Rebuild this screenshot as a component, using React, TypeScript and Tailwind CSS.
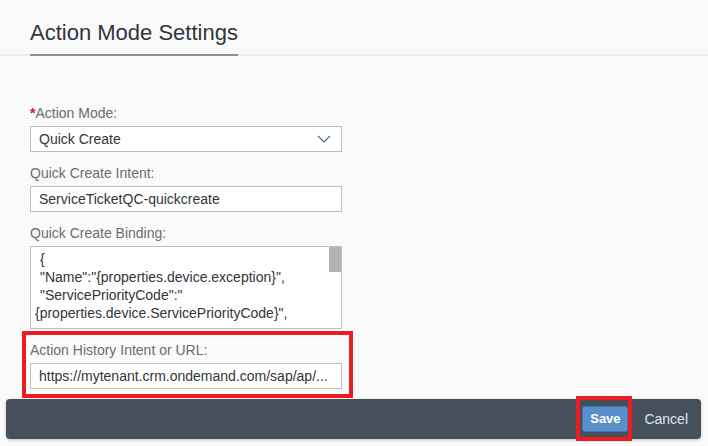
import React from 'react'

const inputBox =
	'h-[26px] border border-[#bfbfbf] bg-white flex items-center px-[8px] text-[14px] text-[#32363a] whitespace-nowrap overflow-hidden'

function Label({ text, required }: { text: string; required?: boolean }) {
	return (
		<div className="h-[18px] leading-[18px] text-[14px] text-[#6a6d70] mb-[4px]">
			{required && <span className="text-[#c9202a] font-bold">*</span>}
			{text}
		</div>
	)
}

const bindingLines = [
	{ text: '{', indent: true },
	{ text: '"Name":"{properties.device.exception}",', indent: true },
	{ text: '"ServicePriorityCode":"', indent: true },
	{ text: '{properties.device.ServicePriorityCode}",', indent: false },
]

export default function App() {
	return (
		<div className="w-[708px] h-[446px] bg-[#fafafa] overflow-hidden font-['Liberation_Sans',Arial,sans-serif]">
			{/* header */}
			<div className="h-[56px] border-b-2 border-[#ececec] px-[30px] flex">
				<div className="mb-[-2px] border-b-2 border-[#8f8f8f] pt-[22px] pb-[10px] text-[22px] leading-[22px] text-[#32363a]">
					Action Mode Settings
				</div>
			</div>

			{/* form */}
			<div className="pt-[48px] px-[30px] w-[342px] box-content">
				<div className="w-[312px]">
					<Label text="Action Mode:" required />
					<div className={`${inputBox} justify-between pr-[10px]`}>
						<span>Quick Create</span>
						<svg width="14" height="8" viewBox="0 0 14 8" fill="none">
							<path d="M1 1 L7 7 L13 1" stroke="#4a6f91" strokeWidth="1.2" />
						</svg>
					</div>

					<div className="mt-[12px]">
						<Label text="Quick Create Intent:" />
						<div className={inputBox}>ServiceTicketQC-quickcreate</div>
					</div>

					<div className="mt-[12px]">
						<Label text="Quick Create Binding:" />
						<div className="h-[83px] border border-[#bfbfbf] bg-white flex overflow-hidden">
							<div className="flex-1 pl-[4px] pt-[3px] text-[14px] leading-[18px] text-[#32363a] whitespace-pre">
								{bindingLines.map((line, idx) => (
									<div key={idx} className={line.indent ? 'pl-[5px]' : ''}>
										{line.text}
									</div>
								))}
							</div>
							<div className="w-[12px]">
								<div className="h-[25px] bg-[#b3b3b3]" />
							</div>
						</div>
					</div>

					<div className="mt-[12px] relative">
						<Label text="Action History Intent or URL:" />
						<div className={inputBox}>https://mytenant.crm.ondemand.com/sap/ap/...</div>
						<span className="absolute left-[-8px] right-[-11px] top-[-10px] bottom-[-9px] border-[4px] border-[#ec1c24] pointer-events-none" />
					</div>
				</div>
			</div>

			{/* footer */}
			<div className="mt-[10px] ml-[6px] w-[695px] h-[40px] rounded-[4px] bg-[#46505a] shadow-[0_1px_3px_rgba(0,0,0,0.25)] flex items-center justify-end pr-[13px]">
				<div className="relative">
					<button className="h-[26px] w-[46px] rounded-[3px] bg-[#5a90c9] border border-[#4479b2] text-white font-bold text-[13px] leading-[24px]">
						Save
					</button>
					<span className="absolute left-[-6px] right-[-4px] top-[-10px] bottom-[-9px] border-[4px] border-[#ec1c24] pointer-events-none" />
				</div>
				<span className="ml-[16px] text-[14px] text-[#dbe6f2]">Cancel</span>
			</div>
		</div>
	)
}
